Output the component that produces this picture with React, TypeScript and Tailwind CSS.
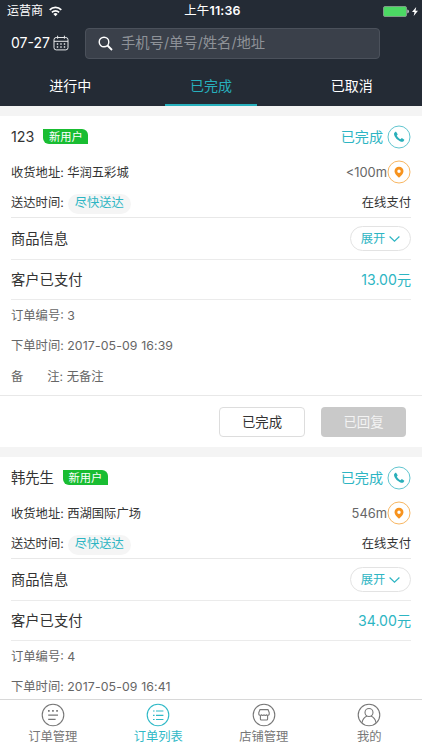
import React from 'react';

interface Order {
  name: string;
  address: string;
  distance: string;
  price: string;
  id: number;
  time: string;
  note?: string;
}

const orders: Order[] = [
  { name: '123', address: '华润五彩城', distance: '<100m', price: '13.00元', id: 3, time: '2017-05-09 16:39', note: '无备注' },
  { name: '韩先生', address: '西湖国际广场', distance: '546m', price: '34.00元', id: 4, time: '2017-05-09 16:41' },
];

const StatusBar: React.FC = () => (
  <div className="grid h-[22px] grid-cols-3 items-center pl-[7px] pr-1 text-[12px] leading-none text-white">
    <div className="flex items-center gap-[6px]">
      <span>运营商</span>
      <svg className="h-[11px] w-[13px]" viewBox="0 0 13 11" fill="none" stroke="currentColor" strokeWidth="1.7">
        <path d="M0.7 3.8a8.2 8.2 0 0 1 11.6 0" />
        <path d="M2.9 6.3a5.1 5.1 0 0 1 7.2 0" />
        <path d="M6.5 10.2 4.4 8.1a3 3 0 0 1 4.2 0z" fill="currentColor" stroke="none" />
      </svg>
    </div>
    <div className="text-center text-[12.4px] tracking-[0.2px]">上午<span className="font-semibold">11:36</span></div>
    <div className="flex items-center justify-end gap-[3px]">
      <svg className="h-[11px] w-[26px]" viewBox="0 0 26 11">
        <rect x="0.5" y="0.5" width="23" height="10" rx="1.5" fill="#4cd964" stroke="#7d9b86" />
        <path d="M24.5 3.6c1.6.6 1.6 3.2 0 3.8z" fill="#fff" />
      </svg>
      <svg className="h-[9px] w-[6px]" viewBox="0 0 6 9" fill="#fff">
        <path d="M4.2 0 0 5.1h2.5L1.7 9 6 3.7H3.5z" />
      </svg>
    </div>
  </div>
);

const Header: React.FC = () => (
  <header className="h-[106px] shrink-0 bg-[#242b35]">
    <StatusBar />
    <div className="flex h-[42px] items-center pl-[11px] text-white">
      <span className="w-[42px] text-[14px] leading-none">07-27</span>
      <svg className="h-4 w-4" viewBox="0 0 16 16" fill="none" stroke="#e6e8ea">
        <rect x="1" y="2.5" width="14" height="12.4" rx="2.2" />
        <path d="M1 6.3h14M4.6 0.7v3M11.4 0.7v3" />
        <path d="M3.8 9h1.4M7.3 9h1.4M10.8 9h1.4M3.8 12h1.4M7.3 12h1.4M10.8 12h1.4" strokeWidth="1.3" />
      </svg>
      <div className="ml-4 flex h-[31px] w-[295px] items-center gap-2 rounded-[4px] border border-[#4b515b] bg-[#3a404a] pl-3">
        <svg className="h-[15px] w-[15px]" viewBox="0 0 15 15" fill="none" stroke="#fff" strokeWidth="1.4">
          <circle cx="6" cy="6" r="4.8" />
          <path d="M9.5 9.5 14 14" strokeWidth="1.8" />
        </svg>
        <span className="text-[14.3px] leading-none text-[#8e9298]">手机号/单号/姓名/地址</span>
      </div>
    </div>
    <nav className="grid h-[42px] grid-cols-3 text-center text-[14px] leading-[43px] text-white">
      <span>进行中</span>
      <span className="mx-auto h-[42px] w-[92px] border-b-2 border-[#27b0bd] text-[#27b0bd]">已完成</span>
      <span>已取消</span>
    </nav>
  </header>
);

const OrderCard: React.FC<{ order: Order }> = ({ order }) => (
  <section className="shrink-0 border-t-10 border-[#f4f4f4] bg-white text-[12.3px] text-[#333]">
    <div className="px-[11px]">
      <div className="flex h-[41px] items-center">
        <span className="text-[14.3px]">{order.name}</span>
        <span className="ml-[9px] flex h-[15px] w-[45px] items-center justify-center rounded-tr-[6px] rounded-bl-[6px] bg-[#19bd32] pt-[2px] text-[11.3px] leading-none text-white">新用户</span>
        <span className="ml-auto text-[14.1px] text-[#2db5c3]">已完成</span>
        <svg className="ml-1 h-6 w-6" viewBox="0 0 24 24">
          <circle cx="12" cy="12" r="11" fill="none" stroke="#61c5cf" />
          <path d="M8.1 7.1 7.1 8.2c-.5 2.1 1.6 5 3.6 6.6 1.9 1.6 4.3 2.6 5.6 1.7l.9-1.2c.2-.4.1-.7-.2-.9l-1.8-1.1c-.4-.2-.8-.1-1.1.3l-.5.6c-1.5-.5-3.1-2.1-3.8-3.7l.6-.6c.3-.3.3-.6.1-1L9.4 7.2c-.4-.5-.9-.5-1.3-.1z" fill="#2aafba" />
        </svg>
      </div>
      <div className="flex h-[30px] items-center">
        <span className="pt-[2px]">收货地址: {order.address}</span>
        <span className="ml-auto pt-px text-[12.9px] text-[#666]">{order.distance}</span>
        <svg className="h-6 w-6" viewBox="0 0 24 24">
          <circle cx="12" cy="12" r="11" fill="none" stroke="#f8b661" />
          <path d="M12 6.7a4.5 4.5 0 0 0-4.5 4.5c0 2.6 2.4 4.3 4.5 6.5 2.1-2.2 4.5-3.9 4.5-6.5A4.5 4.5 0 0 0 12 6.7zm0 2.8a1.7 1.7 0 1 1 0 3.4 1.7 1.7 0 0 1 0-3.4z" fill="#f7931e" />
        </svg>
      </div>
      <div className="flex h-[31px] items-center border-b border-[#e8e8e8] pt-[3px]">
        <span>送达时间:</span>
        <span className="ml-1 flex h-5 w-[63px] items-center justify-center rounded-full bg-[#f5f5f5] text-[#2db5c3]">尽快送达</span>
        <span className="ml-auto">在线支付</span>
      </div>
      <div className="flex h-[42px] items-center border-b border-[#ebebeb] text-[14.3px]">
        <span>商品信息</span>
        <span className="ml-auto flex h-[25px] w-[61px] items-center justify-center gap-1 rounded-full border border-[#e3e3e3] pt-px text-[12.3px] text-[#2db5c3]">
          展开
          <svg className="h-[6px] w-[11px]" viewBox="0 0 11 6" fill="none" stroke="currentColor" strokeWidth="1.2">
            <path d="M0.6 0.5 5.5 5.1 10.4 0.5" />
          </svg>
        </span>
      </div>
      <div className="flex h-[40px] items-center justify-between border-b border-[#ebebeb] text-[14.3px]">
        <span>客户已支付</span>
        <span className="text-[14.1px] text-[#2db5c3]">{order.price}</span>
      </div>
      <div className="text-[#666]">
        <p className="h-[31px] leading-[31px]">订单编号: {order.id}</p>
        <p className="h-[27px] leading-[30px]">下单时间: <span className="tracking-[0.12px]">{order.time}</span></p>
        {order.note && (
          <p className="flex h-[37px] items-center pt-[2px]"><span className="mr-6">备</span>注: {order.note}</p>
        )}
      </div>
    </div>
    {order.note && (
      <div className="flex h-[52px] justify-end gap-4 border-t border-[#e8e8e8] pt-[11px] pr-4 text-[13.4px]">
        <button className="h-[30px] w-[86px] rounded-[4px] border border-[#ddd]">已完成</button>
        <button className="h-[30px] w-[85px] rounded-[4px] bg-[#c9c9c9] text-[#f3f3f3]">已回复</button>
      </div>
    )}
  </section>
);

const tabs = [
  {
    label: '订单管理',
    icon: (
      <>
        <path d="M7 7.8h1.7M11.1 7.8h1.7M15.2 7.8h1.7" strokeWidth="1.7" />
        <path d="M7.2 12.2h9.8M7.2 16.4h7.4" strokeWidth="1.2" />
      </>
    ),
  },
  {
    label: '订单列表',
    icon: <path d="M7 8h1.6M10 8h7.4M7 12.3h1.6M10 12.3h7.4M7 16.5h1.6M10 16.5h7.4" strokeWidth="1.2" />,
  },
  {
    label: '店铺管理',
    icon: (
      <>
        <path d="M8 6.6h8l1.2 3v1.6a1.6 1.6 0 0 1-2.6.6 1.8 1.8 0 0 1-2.6 0 1.8 1.8 0 0 1-2.6 0 1.6 1.6 0 0 1-2.6-.6V9.6z" />
        <path d="M8.4 12.2V16c0 .7.3 1 1 1h5.2c.7 0 1-.3 1-1v-3.8" />
      </>
    ),
  },
  {
    label: '我的',
    icon: (
      <>
        <circle cx="12" cy="9.5" r="4" />
        <path d="M4.9 19.9c.7-3.6 2.8-5.8 5.1-6.8M19.1 19.9c-.7-3.6-2.8-5.8-5.1-6.8" />
      </>
    ),
  },
];

const TabBar: React.FC = () => (
  <nav className="grid h-[51px] shrink-0 grid-cols-4 border-t border-[#d8d8d8] bg-white pt-[3px] text-[12.3px] leading-[20px]">
    {tabs.map((tab, idx) => (
      <div key={tab.label} className={`flex flex-col items-center ${idx === 1 ? 'text-[#2fb9c7]' : 'text-[#777]'}`}>
        <svg className="h-6 w-6" viewBox="0 0 24 24" fill="none" stroke="currentColor" strokeWidth="1.1">
          <circle cx="12" cy="12" r="10.8" />
          {tab.icon}
        </svg>
        <span>{tab.label}</span>
      </div>
    ))}
  </nav>
);

const App: React.FC = () => (
  <div className="flex h-[750px] w-[422px] flex-col overflow-hidden whitespace-nowrap bg-white font-['Inter','Noto_Sans_CJK_SC',sans-serif]">
    <Header />
    <main className="flex min-h-0 flex-1 flex-col overflow-hidden">
      {orders.map((order) => (
        <OrderCard key={order.id} order={order} />
      ))}
    </main>
    <TabBar />
  </div>
);

export default App;
